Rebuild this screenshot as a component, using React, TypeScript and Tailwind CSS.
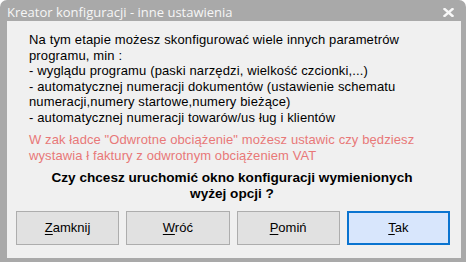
import React from "react";

function Btn({ first, rest, primary }: { first: string; rest: string; primary?: boolean }) {
  return (
    <div
      className={
        "h-[34px] flex items-center justify-center text-[13px] text-black " +
        (primary
          ? "bg-[#d8e6fc] border-2 border-[#0a74d0]"
          : "bg-[#e1e1e1] border border-[#adadad]")
      }
    >
      <span>
        <span className="underline underline-offset-2">{first}</span>
        {rest}
      </span>
    </div>
  );
}

export default function App() {
  return (
    <div
      className="w-[466px] h-[262px] bg-[#a9a9a9] rounded-t-[7px] flex flex-col overflow-hidden"
      style={{ fontFamily: '"Liberation Sans", Arial, sans-serif' }}
    >
      <div className="h-[21px] flex items-center justify-between pl-[7px] pr-[12px] shrink-0">
        <span
          className="text-[13px] text-[#f6f6f6] leading-none mt-[4px]"
          style={{ fontFamily: '"Open Sans", "Noto Sans", sans-serif' }}
        >
          Kreator konfiguracji - inne ustawienia
        </span>
        <svg width="11" height="9" viewBox="0 0 11 9" className="mt-[3px]">
          <path d="M1.5 1 L9.5 8 M9.5 1 L1.5 8" stroke="#f8f8f8" strokeWidth="2.4" strokeLinecap="square" />
        </svg>
      </div>
      <div className="flex-1 ml-[7px] mr-[5px] mb-[4px] bg-[#f0f0f0] flex flex-col text-[13px] text-black">
        <div className="pl-[22px] pt-[11px] leading-[15.6px] tracking-[0.14px]">
          <div>Na tym etapie możesz skonfigurować wiele innych parametrów</div>
          <div>programu, min :</div>
          <div>- wyglądu programu (paski narzędzi, wielkość czcionki,...)</div>
          <div>- automatycznej numeracji dokumentów (ustawienie schematu</div>
          <div>numeracji,numery startowe,numery bieżące)</div>
          <div>- automatycznej numeracji towarów/us ług i klientów</div>
        </div>
        <div className="pl-[22px] mt-[6px] leading-[16.5px] tracking-[0.1px] text-[#e87878]">
          <div>W zak ładce "Odwrotne obciążenie" możesz ustawic czy będziesz</div>
          <div>wystawia ł faktury z odwrotnym obciążeniem VAT</div>
        </div>
        <div className="mt-[5px] text-center font-bold text-[13.6px] leading-[16px] pr-[4px]">
          <div>Czy chcesz uruchomić okno konfiguracji wymienionych</div>
          <div>wyżej opcji ?</div>
        </div>
        <div className="grid grid-cols-4 gap-[7px] ml-[9px] mr-[11px] mt-[9px]">
          <Btn first="Z" rest="amknij" />
          <Btn first="W" rest="róć" />
          <Btn first="P" rest="omiń" />
          <Btn first="T" rest="ak" primary />
        </div>
      </div>
    </div>
  );
}
